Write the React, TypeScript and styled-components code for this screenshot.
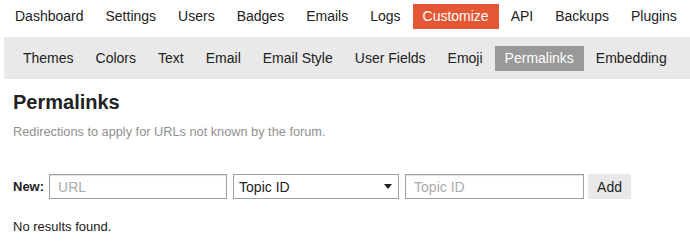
import styled, { createGlobalStyle } from 'styled-components';

const GlobalStyle = createGlobalStyle`
  body {
    margin: 0;
    background: #fff;
    font-family: "Liberation Sans", Arial, sans-serif;
    color: #222;
  }
`;

const mainTabs = ['Dashboard', 'Settings', 'Users', 'Badges', 'Emails', 'Logs', 'Customize', 'API', 'Backups', 'Plugins'];
const subTabs = ['Themes', 'Colors', 'Text', 'Email', 'Email Style', 'User Fields', 'Emoji', 'Permalinks', 'Embedding'];

const App = () => {
  return (
    <Page>
      <GlobalStyle />
      <MainNav>
        {mainTabs.map((t) => (
          <MainTab key={t} $active={t === 'Customize'}>
            {t}
          </MainTab>
        ))}
      </MainNav>
      <SubNav>
        {subTabs.map((t) => (
          <SubTab key={t} $active={t === 'Permalinks'}>
            {t}
          </SubTab>
        ))}
      </SubNav>
      <Content>
        <Title>Permalinks</Title>
        <Description>Redirections to apply for URLs not known by the forum.</Description>
        <Form>
          <Label>New:</Label>
          <TextInput $width={178} placeholder="URL" />
          <SelectBox>
            <span>Topic ID</span>
            <Caret viewBox="0 0 8 5">
              <path d="M0 0h8L4 5z" fill="#222" />
            </Caret>
          </SelectBox>
          <TextInput $width={179} placeholder="Topic ID" />
          <AddButton>Add</AddButton>
        </Form>
        <Empty>No results found.</Empty>
      </Content>
    </Page>
  );
};

// Styled Components
const Page = styled.div`
  width: 690px;
  height: 245px;
  overflow: hidden;
`;

const MainNav = styled.div`
  display: flex;
  gap: 2px;
  padding: 4px 0 0 5px;
  height: 33px;
  box-sizing: border-box;
`;

const MainTab = styled.div<{ $active?: boolean }>`
  height: 25px;
  line-height: 25px;
  padding: 0 10px;
  font-size: 14px;
  color: ${(p) => (p.$active ? '#fff' : '#222')};
  background: ${(p) => (p.$active ? '#e45735' : 'transparent')};
`;

const SubNav = styled.div`
  display: flex;
  align-items: center;
  gap: 2px;
  margin: 4px 0 0 4px;
  height: 42px;
  padding-left: 9px;
  background: #e9e9e9;
`;

const SubTab = styled.div<{ $active?: boolean }>`
  height: 25px;
  line-height: 25px;
  padding: 0 10px;
  font-size: 14px;
  color: ${(p) => (p.$active ? '#fff' : '#222')};
  background: ${(p) => (p.$active ? '#999' : 'transparent')};
`;

const Content = styled.div`
  padding: 0 13px;
`;

const Title = styled.h1`
  margin: 11px 0 0;
  font-size: 20px;
  line-height: 24px;
  font-weight: bold;
  color: #222;
`;

const Description = styled.p`
  margin: 10px 0 0;
  font-size: 12.75px;
  line-height: 16px;
  color: #919191;
`;

const Form = styled.div`
  display: flex;
  align-items: center;
  margin-top: 34px;
  height: 25px;
`;

const Label = styled.span`
  font-size: 13px;
  font-weight: bold;
  color: #222;
  margin-right: 5px;
`;

const TextInput = styled.input<{ $width: number }>`
  width: ${(p) => p.$width}px;
  height: 25px;
  box-sizing: border-box;
  border: 1px solid #a0a0a0;
  box-shadow: inset 0 1px 1px rgba(0, 0, 0, 0.12);
  padding: 0 8px;
  margin-right: 6px;
  font-family: inherit;
  font-size: 14px;
  outline: none;
  &::placeholder {
    color: #aaa;
  }
`;

const SelectBox = styled.div`
  width: 166px;
  height: 25px;
  box-sizing: border-box;
  border: 1px solid #a0a0a0;
  display: flex;
  align-items: center;
  justify-content: space-between;
  padding: 0 6px 0 5px;
  margin-right: 6px;
  font-size: 14px;
  color: #222;
`;

const Caret = styled.svg`
  width: 8px;
  height: 5px;
`;

const AddButton = styled.button`
  height: 25px;
  width: 43px;
  margin-left: -2px;
  border: none;
  background: #e9e9e9;
  font-family: inherit;
  font-size: 14px;
  color: #222;
  padding: 0;
`;

const Empty = styled.p`
  margin: 20px 0 0;
  font-size: 13px;
  line-height: 16px;
  color: #222;
`;

export default App;
